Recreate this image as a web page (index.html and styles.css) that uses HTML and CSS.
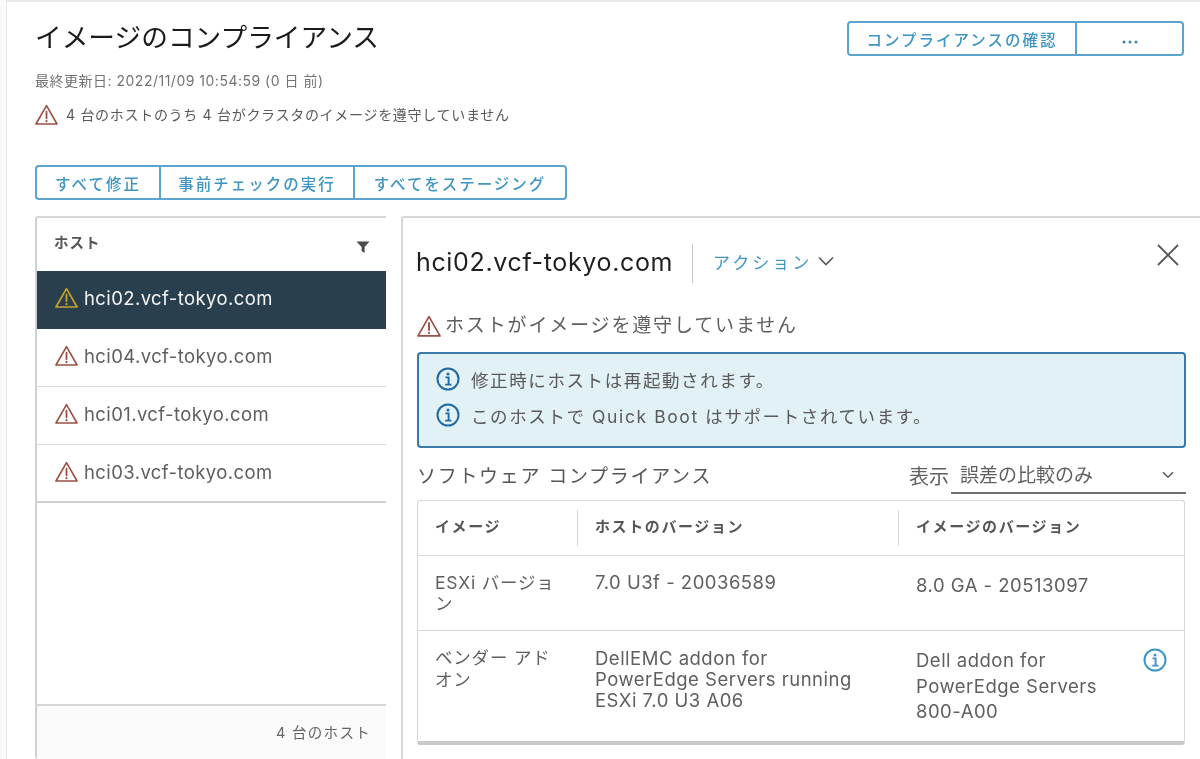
FILE: index.html
```html
<!DOCTYPE html>
<html lang="ja">
<head>
  <meta charset="UTF-8" />
  <title>イメージのコンプライアンス</title>
  <link rel="stylesheet" href="styles.css">
</head>
<body>
  <svg class="icon-defs" width="0" height="0">
    <symbol id="warn" viewBox="0 0 24 22">
      <path d="M12 1.2 1 20.4h22z" fill="none" stroke="currentColor" stroke-width="1.7" stroke-linejoin="round"/>
      <path d="M12 7.5v7" stroke="currentColor" stroke-width="1.9" stroke-linecap="round"/>
      <circle cx="12" cy="17.4" r="1.1" fill="currentColor"/>
    </symbol>
    <symbol id="info" viewBox="0 0 24 24">
      <circle cx="12" cy="12" r="10.5" fill="none" stroke="currentColor" stroke-width="2"/>
      <circle cx="12" cy="6.9" r="1.5" fill="currentColor"/>
      <path d="M9.4 10.4H12.6V17.2M9.2 17.6h6.2" fill="none" stroke="currentColor" stroke-width="1.9"/>
    </symbol>
  </svg>

  <main class="card">
    <header class="card-head">
      <div>
        <h1 class="title">イメージのコンプライアンス</h1>
        <p class="updated">最終更新日: 2022/11/09 10:54:59 (0 日 前)</p>
        <p class="summary">
          <svg class="icon-warn"><use href="#warn"/></svg>
          <span>4 台のホストのうち 4 台がクラスタのイメージを遵守していません</span>
        </p>
      </div>
      <div class="btn-group top-actions">
        <button class="btn btn-check">コンプライアンスの確認</button>
        <button class="btn btn-more">
          <svg width="18" height="4" viewBox="0 0 18 4"><circle cx="3" cy="2" r="1.5"/><circle cx="9" cy="2" r="1.5"/><circle cx="15" cy="2" r="1.5"/></svg>
        </button>
      </div>
    </header>

    <div class="btn-group bulk-actions">
      <button class="btn">すべて修正</button>
      <button class="btn">事前チェックの実行</button>
      <button class="btn">すべてをステージング</button>
    </div>

    <div class="split">
      <section class="hosts">
        <div class="hosts-head">
          <span>ホスト</span>
          <svg width="14" height="14" viewBox="0 0 14 14"><path d="M.5 1.5h13L8.6 7v6L5.6 11V7z" fill="#4a4a4a"/></svg>
        </div>
        <ul class="host-list">
          <li class="host selected"><svg class="icon-host"><use href="#warn"/></svg>hci02.vcf-tokyo.com</li>
          <li class="host"><svg class="icon-host"><use href="#warn"/></svg>hci04.vcf-tokyo.com</li>
          <li class="host"><svg class="icon-host"><use href="#warn"/></svg>hci01.vcf-tokyo.com</li>
          <li class="host"><svg class="icon-host"><use href="#warn"/></svg>hci03.vcf-tokyo.com</li>
        </ul>
        <div class="hosts-foot">4 台のホスト</div>
      </section>

      <section class="detail">
        <div class="detail-head">
          <h2 class="detail-title">hci02.vcf-tokyo.com</h2>
          <a class="actions">アクション
            <svg width="16" height="10" viewBox="0 0 16 10"><path d="M1 1.5l7 7 7-7" fill="none" stroke="#565656" stroke-width="1.6"/></svg>
          </a>
          <svg class="close" width="22" height="22" viewBox="0 0 22 22"><path d="M1 1l20 20M21 1 1 21" stroke="#565656" stroke-width="1.8"/></svg>
        </div>

        <p class="status">
          <svg class="icon-status"><use href="#warn"/></svg>
          <span>ホストがイメージを遵守していません</span>
        </p>

        <div class="notice">
          <p class="notice-row"><svg class="icon-info"><use href="#info"/></svg>修正時にホストは再起動されます。</p>
          <p class="notice-row"><svg class="icon-info"><use href="#info"/></svg>このホストで Quick Boot はサポートされています。</p>
        </div>

        <div class="section-head">
          <h3 class="section-title">ソフトウェア コンプライアンス</h3>
          <div class="view">
            <span class="view-label">表示</span>
            <div class="select">
              <span>誤差の比較のみ</span>
              <svg width="12" height="8" viewBox="0 0 12 8"><path d="M1 1.2l5 5 5-5" fill="none" stroke="#565656" stroke-width="1.5"/></svg>
            </div>
          </div>
        </div>

        <div class="grid">
          <div class="grid-row grid-header">
            <div class="cell">イメージ</div>
            <div class="cell">ホストのバージョン</div>
            <div class="cell">イメージのバージョン</div>
          </div>
          <div class="grid-row row-esxi">
            <div class="cell cell-name">ESXi バージョン</div>
            <div class="cell">7.0 U3f - 20036589</div>
            <div class="cell cell-image">8.0 GA - 20513097</div>
          </div>
          <div class="grid-row row-addon">
            <div class="cell cell-name">ベンダー アドオン</div>
            <div class="cell">DellEMC addon for<br>PowerEdge Servers running<br>ESXi 7.0 U3 A06</div>
            <div class="cell cell-image cell-addon">
              <span>Dell addon for<br>PowerEdge Servers<br>800-A00</span>
              <svg class="icon-addon"><use href="#info"/></svg>
            </div>
          </div>
        </div>
      </section>
    </div>
  </main>
</body>
</html>
```

FILE: styles.css
```css
* {
  box-sizing: border-box;
}

html,
body {
  height: 100%;
}

body {
  margin: 0;
  background: #fafafa;
  color: #565656;
  font-family: Inter, "Noto Sans CJK JP", sans-serif;
  overflow: hidden;
}

h1,
h2,
h3,
p,
ul {
  margin: 0;
  padding: 0;
}

.icon-defs {
  display: block;
}

.card {
  height: 759px;
  margin-left: 6px;
  padding: 0 0 0 28px;
  background: #fff;
  border-top: 2px solid #e8e8e8;
  border-left: 1px solid #e8e8e8;
  display: flex;
  flex-direction: column;
  filter: blur(0.35px);
}

.card-head {
  display: flex;
  justify-content: space-between;
  align-items: flex-start;
  padding-right: 16px;
}

.title {
  margin-top: 18px;
  font-size: 26.7px;
  line-height: 34px;
  font-weight: 400;
  color: #1b1b1b;
}

.updated {
  margin-top: 16px;
  font-size: 14px;
  line-height: 22px;
  letter-spacing: 0.5px;
  color: #737373;
}

.summary {
  margin-top: 12px;
  display: flex;
  align-items: center;
  gap: 8px;
  font-size: 14px;
  line-height: 22px;
  letter-spacing: 0.7px;
  color: #595959;
}

.icon-warn {
  width: 23px;
  height: 22px;
  color: #9c5045;
}

.btn-group {
  display: flex;
  border: 2px solid #5aa4cd;
  border-radius: 4px;
  background: #fff;
}

.btn {
  height: 100%;
  padding: 0;
  background: none;
  border: 0;
  border-left: 2px solid #5aa4cd;
  color: #3f95c4;
  font-family: inherit;
  font-size: 15.5px;
  font-weight: 500;
  letter-spacing: 2px;
}

.btn:first-child {
  border-left: 0;
}

.top-actions {
  width: 337px;
  height: 35px;
  margin-top: 19px;
}

.btn-check {
  width: 226px;
}

.btn-more {
  flex: 1;
  fill: #3f84ad;
}

.bulk-actions {
  align-self: flex-start;
  width: 532px;
  height: 35px;
  margin-top: 39px;
}

.bulk-actions .btn:nth-child(1) {
  width: 122px;
}

.bulk-actions .btn:nth-child(2) {
  width: 194px;
}

.bulk-actions .btn:nth-child(3) {
  flex: 1;
}

.split {
  flex: 1;
  min-height: 0;
  display: flex;
  gap: 15px;
  margin-top: 16px;
}

.hosts {
  width: 351px;
  display: flex;
  flex-direction: column;
  border-top: 2px solid #d7d7d7;
  border-left: 2px solid #d0d0d0;
  border-radius: 3px 0 0 3px;
}

.hosts-head {
  height: 53px;
  padding: 0 16px 0 17px;
  display: flex;
  justify-content: space-between;
  align-items: center;
  font-size: 14.5px;
  font-weight: 700;
  letter-spacing: 1px;
  color: #565656;
}

.hosts-head span {
  margin-bottom: 6px;
}

.hosts-head svg {
  margin-top: 4px;
}

.host-list {
  flex: 1;
  list-style: none;
}

.host {
  height: 58px;
  padding: 0 0 3px 18px;
  display: flex;
  align-items: center;
  gap: 6px;
  font-size: 18.5px;
  letter-spacing: 0.4px;
  color: #5f5f5f;
  border-bottom: 1px solid #d7d7d7;
}

.host:last-child {
  border-bottom-width: 2px;
  border-bottom-color: #cfcfcf;
}

.host.selected {
  padding-bottom: 5px;
  background: #293f4d;
  color: #f2f4f5;
  border-bottom: 0;
}

.icon-host {
  width: 23px;
  height: 22px;
  color: #9c5045;
}

.selected .icon-host {
  color: #c7a32e;
}

.hosts-foot {
  height: 55px;
  padding: 0 15px 3px 0;
  display: flex;
  justify-content: flex-end;
  align-items: center;
  background: #fafafa;
  border-top: 2px solid #d7d7d7;
  font-size: 14.5px;
  letter-spacing: 1.3px;
  color: #666;
}

.detail {
  flex: 1;
  padding: 0 14px;
  border-top: 2px solid #d7d7d7;
  border-left: 2px solid #d7d7d7;
  border-radius: 3px 0 0 0;
  min-width: 0;
}

.detail-head {
  height: 65px;
  padding-top: 26px;
  display: flex;
  align-items: flex-start;
}

.detail-title {
  width: 277px;
  height: 39px;
  margin-left: -1px;
  font-size: 25px;
  line-height: 36px;
  font-weight: 400;
  letter-spacing: 0.65px;
  color: #1f1f1f;
  border-right: 1px solid #c6c6c6;
}

.actions {
  margin-left: 20px;
  display: flex;
  align-items: center;
  gap: 6px;
  height: 34px;
  font-size: 17px;
  letter-spacing: 3px;
  color: #3f95c4;
}

.close {
  margin-left: auto;
  margin-right: 7px;
}

.status {
  margin-top: 31px;
  display: flex;
  align-items: center;
  gap: 4px;
  font-size: 19px;
  line-height: 24px;
  letter-spacing: 1.85px;
  color: #5f5f5f;
}

.icon-status {
  width: 24px;
  height: 23px;
  color: #9c5045;
}

.notice {
  height: 96px;
  margin-top: 14px;
  padding: 7px 0 0 17px;
  background: #e1f1f6;
  border: 2px solid #3a79a9;
  border-radius: 4px;
}

.notice-row {
  height: 36px;
  display: flex;
  align-items: center;
  gap: 11px;
  font-size: 17.5px;
  letter-spacing: 1.6px;
  color: #5a5a5a;
}

.icon-info {
  width: 24px;
  height: 24px;
  color: #1f6aa0;
}

.section-head {
  margin-top: 12px;
  height: 34px;
  display: flex;
  justify-content: space-between;
  align-items: flex-start;
}

.section-title {
  font-size: 19px;
  line-height: 34px;
  font-weight: 400;
  letter-spacing: 1.7px;
  color: #565656;
}

.view {
  display: flex;
  align-items: flex-start;
  font-size: 19px;
  line-height: 32px;
  color: #5f5f5f;
}

.view-label {
  font-size: 20px;
  line-height: 34px;
}

.select {
  width: 235px;
  height: 34px;
  margin-left: 2px;
  padding: 0 12px 0 9px;
  display: flex;
  justify-content: space-between;
  align-items: center;
  border-bottom: 2px solid #707070;
}

.select span {
  line-height: 30px;
}

.select svg {
  margin-top: -2px;
}

.grid {
  margin: 6px 1px 0 0;
  border: 1.5px solid #d7d7d7;
  border-bottom: 4px solid #c9c9c9;
  border-radius: 3px;
}

.grid-row {
  display: grid;
  grid-template-columns: 159px 321px 1fr;
  border-bottom: 1px solid #d7d7d7;
}

.grid-row:last-child {
  border-bottom: 0;
}

.cell {
  padding: 0 17px;
  font-size: 18.5px;
  letter-spacing: 0.5px;
  color: #5f5f5f;
}

.cell + .cell {
  padding-left: 18px;
}

.cell-name {
  font-size: 17.5px;
  letter-spacing: 0.8px;
}

.grid-header {
  height: 55px;
  align-items: center;
}

.grid-header .cell {
  height: 36px;
  padding-left: 17px;
  font-size: 15px;
  font-weight: 700;
  line-height: 34px;
  letter-spacing: 1.6px;
  color: #565656;
  border-left: 1px solid #d7d7d7;
}

.grid-header .cell:first-child {
  border-left: 0;
}

.row-esxi {
  height: 75px;
}

.row-esxi .cell {
  padding-top: 15px;
  line-height: 22px;
}

.row-esxi .cell-name {
  padding-top: 16px;
  line-height: 21px;
}

.row-esxi .cell-image {
  padding-top: 18px;
}

.row-addon {
  height: 110px;
}

.row-addon .cell {
  padding-top: 17px;
  line-height: 21px;
}

.row-addon .cell-name {
  padding-top: 16px;
  line-height: 22px;
}

.row-addon .cell-addon {
  padding: 17px 0 0 18px;
  line-height: 25.5px;
  display: flex;
  justify-content: space-between;
  align-items: flex-start;
}

.icon-addon {
  width: 24px;
  height: 24px;
  margin: 0 17px 0 0;
  color: #3f95c4;
}
```
